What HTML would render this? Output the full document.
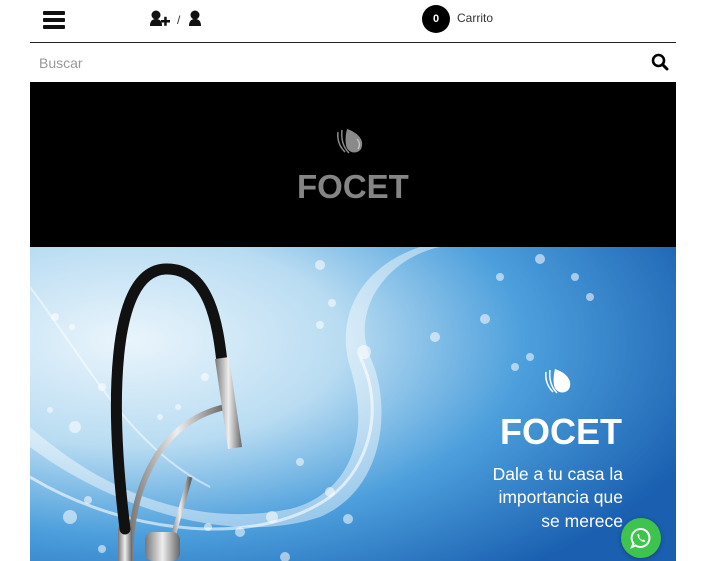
<!DOCTYPE html>
<html><head><meta charset="utf-8"><style>
*{margin:0;padding:0;box-sizing:border-box}
body{width:706px;height:561px;overflow:hidden;background:#fff;font-family:"Liberation Sans",sans-serif;position:relative}
.abs{position:absolute}
</style></head><body>
<div class="abs" style="left:43px;top:11px;width:22px;height:18px">
 <div style="height:4px;background:#111;border-radius:1px;margin-bottom:3px"></div>
 <div style="height:4px;background:#111;border-radius:1px;margin-bottom:3px"></div>
 <div style="height:4px;background:#111;border-radius:1px"></div>
</div>
<svg class="abs" style="left:150px;top:10px" width="60" height="18" viewBox="0 0 60 18">
 <circle cx="6" cy="5" r="4.5" fill="#111"/><path d="M0 16 Q0 9 6 9 Q12 9 12 16Z" fill="#111"/>
 <rect x="11" y="10" width="9" height="2.5" fill="#111"/><rect x="14.2" y="6.8" width="2.5" height="9" fill="#111"/>
 <text x="27" y="14" font-size="12" fill="#333" font-family="Liberation Sans">/</text>
 <circle cx="45" cy="5" r="4.5" fill="#111"/><path d="M39 16 Q39 9 45 9 Q51 9 51 16Z" fill="#111"/>
</svg>
<div class="abs" style="left:422px;top:5px;width:28px;height:28px;border-radius:50%;background:#000;color:#fff;font-size:11px;font-weight:bold;text-align:center;line-height:28px">0</div>
<div class="abs" style="left:457px;top:11px;font-size:12px;color:#333">Carrito</div>
<div class="abs" style="left:30px;top:42px;width:646px;height:1px;background:#222"></div>
<div class="abs" style="left:39px;top:55px;font-size:14px;color:#999">Buscar</div>
<svg class="abs" style="left:651px;top:53px" width="18" height="18" viewBox="0 0 18 18"><circle cx="7.5" cy="7.5" r="5.5" fill="none" stroke="#000" stroke-width="2.6"/><path d="M11.5 11.5 L16 16" stroke="#000" stroke-width="3" stroke-linecap="round"/></svg>
<div class="abs" style="left:30px;top:82px;width:646px;height:165px;background:#000"></div>
<svg class="abs" style="left:333px;top:127px" width="32" height="28" viewBox="0 0 32 28">
 <path d="M14 2 C26 6 32 14 28 22 C24 28 14 26 13 18 C12 12 13 6 14 2Z" fill="#8a8a8a"/>
 <path d="M9 3 C8 12 10 20 16 26" stroke="#8a8a8a" stroke-width="1.5" fill="none"/>
 <path d="M5 5 C4 13 7 20 12 25" stroke="#8a8a8a" stroke-width="1.5" fill="none"/>
 <path d="M24 12 C27 15 27 19 25 22" stroke="#ccc" stroke-width="1.2" fill="none"/>
</svg>
<div class="abs" style="left:297px;top:168px;font-size:33px;font-weight:bold;color:#858585">FOCET</div>
<svg class="abs" style="left:30px;top:247px" width="646" height="314" viewBox="0 0 646 314">
 <defs>
  <radialGradient id="bg" cx="0.15" cy="0.3" r="0.95">
   <stop offset="0" stop-color="#eaf5fc"/><stop offset="0.35" stop-color="#b9dcf2"/>
   <stop offset="0.65" stop-color="#4c9fdc"/><stop offset="1" stop-color="#1a5fb0"/>
  </radialGradient>
  <linearGradient id="chrome" x1="0" x2="1"><stop offset="0" stop-color="#777"/><stop offset="0.5" stop-color="#eee"/><stop offset="1" stop-color="#666"/></linearGradient>
 </defs>
 <rect width="646" height="314" fill="url(#bg)"/>
 <path d="M0 200 C80 260 200 300 290 270 C360 240 360 150 340 110 C320 60 360 10 410 0 L390 0 C330 20 305 70 320 120 C345 200 310 250 260 262 C170 280 80 250 0 180Z" fill="#ffffff" opacity="0.45"/>
 <path d="M0 230 C100 290 230 300 300 250 C340 220 355 160 330 110" stroke="#fff" stroke-width="3" fill="none" opacity="0.6"/>
 <path d="M0 40 C60 120 100 200 180 240" stroke="#fff" stroke-width="2" fill="none" opacity="0.5"/>
 <path d="M100 314 C100 240 130 175 195 160" stroke="url(#chrome)" stroke-width="6" fill="none"/>
 <rect x="88" y="280" width="14" height="34" fill="url(#chrome)"/>
 <path d="M95 282 C80 160 80 25 135 22 C180 20 188 80 192 115" stroke="#111" stroke-width="11" fill="none" stroke-linecap="round"/>
 <path d="M185 112 L199 110 L212 200 L198 202Z" fill="url(#chrome)"/>
 <path d="M160 230 L140 300" stroke="url(#chrome)" stroke-width="5"/>
 <rect x="115" y="285" width="35" height="29" rx="8" fill="url(#chrome)"/>
 <g fill="#fff" opacity="0.55">
  <circle cx="290" cy="18" r="5"/><circle cx="302" cy="56" r="4"/><circle cx="290" cy="78" r="4"/><circle cx="334" cy="105" r="7"/>
  <circle cx="72" cy="140" r="4"/><circle cx="45" cy="180" r="6"/><circle cx="20" cy="163" r="3"/><circle cx="58" cy="253" r="4"/>
  <circle cx="40" cy="270" r="7"/><circle cx="72" cy="302" r="4"/><circle cx="210" cy="285" r="5"/><circle cx="242" cy="270" r="6"/>
  <circle cx="255" cy="310" r="5"/><circle cx="178" cy="280" r="4"/><circle cx="130" cy="170" r="3"/><circle cx="148" cy="160" r="3"/>
  <circle cx="405" cy="90" r="5"/><circle cx="455" cy="72" r="5"/><circle cx="470" cy="30" r="4"/><circle cx="510" cy="12" r="5"/>
  <circle cx="545" cy="30" r="4"/><circle cx="560" cy="50" r="4"/><circle cx="485" cy="120" r="4"/><circle cx="500" cy="110" r="4"/>
  <circle cx="25" cy="70" r="4"/><circle cx="42" cy="80" r="3"/><circle cx="175" cy="130" r="4"/>
  <circle cx="318" cy="272" r="5"/><circle cx="300" cy="245" r="5"/><circle cx="270" cy="215" r="4"/>
 </g>
 <g transform="translate(511,120)">
  <path d="M14 2 C26 6 32 14 28 22 C24 28 14 26 13 18 C12 12 13 6 14 2Z" fill="#fff"/>
  <path d="M9 3 C8 12 10 20 16 26" stroke="#fff" stroke-width="1.5" fill="none"/>
  <path d="M5 5 C4 13 7 20 12 25" stroke="#fff" stroke-width="1.5" fill="none"/>
 </g>
 <text x="470" y="197" font-size="36" font-weight="bold" fill="#fff" font-family="Liberation Sans">FOCET</text>
 <text x="593" y="233" font-size="17.5" fill="#fff" text-anchor="end" font-family="Liberation Sans">Dale a tu casa la</text>
 <text x="593" y="256" font-size="17.5" fill="#fff" text-anchor="end" font-family="Liberation Sans">importancia que</text>
 <text x="593" y="280" font-size="17.5" fill="#fff" text-anchor="end" font-family="Liberation Sans">se merece</text>
</svg>
<div class="abs" style="left:621px;top:518px;width:40px;height:40px;border-radius:50%;background:#3fc34f;box-shadow:0 1px 4px rgba(0,0,0,.3)"></div>
<svg class="abs" style="left:630px;top:527px" width="22" height="22" viewBox="0 0 22 22">
 <path d="M11 2 A9 9 0 1 1 5.5 18.5 L2 20 L3.5 16.5 A9 9 0 0 1 11 2Z" fill="none" stroke="#fff" stroke-width="2"/>
 <path d="M7.5 7 C7 9 9 13.5 13.5 15 C15 15.3 15.5 14 15 13.5 L13.5 12.5 L12.5 13.3 C11 12.5 9.8 11.3 9 10 L9.8 9 L8.8 7.2Z" fill="#fff"/>
</svg>
</body></html>
